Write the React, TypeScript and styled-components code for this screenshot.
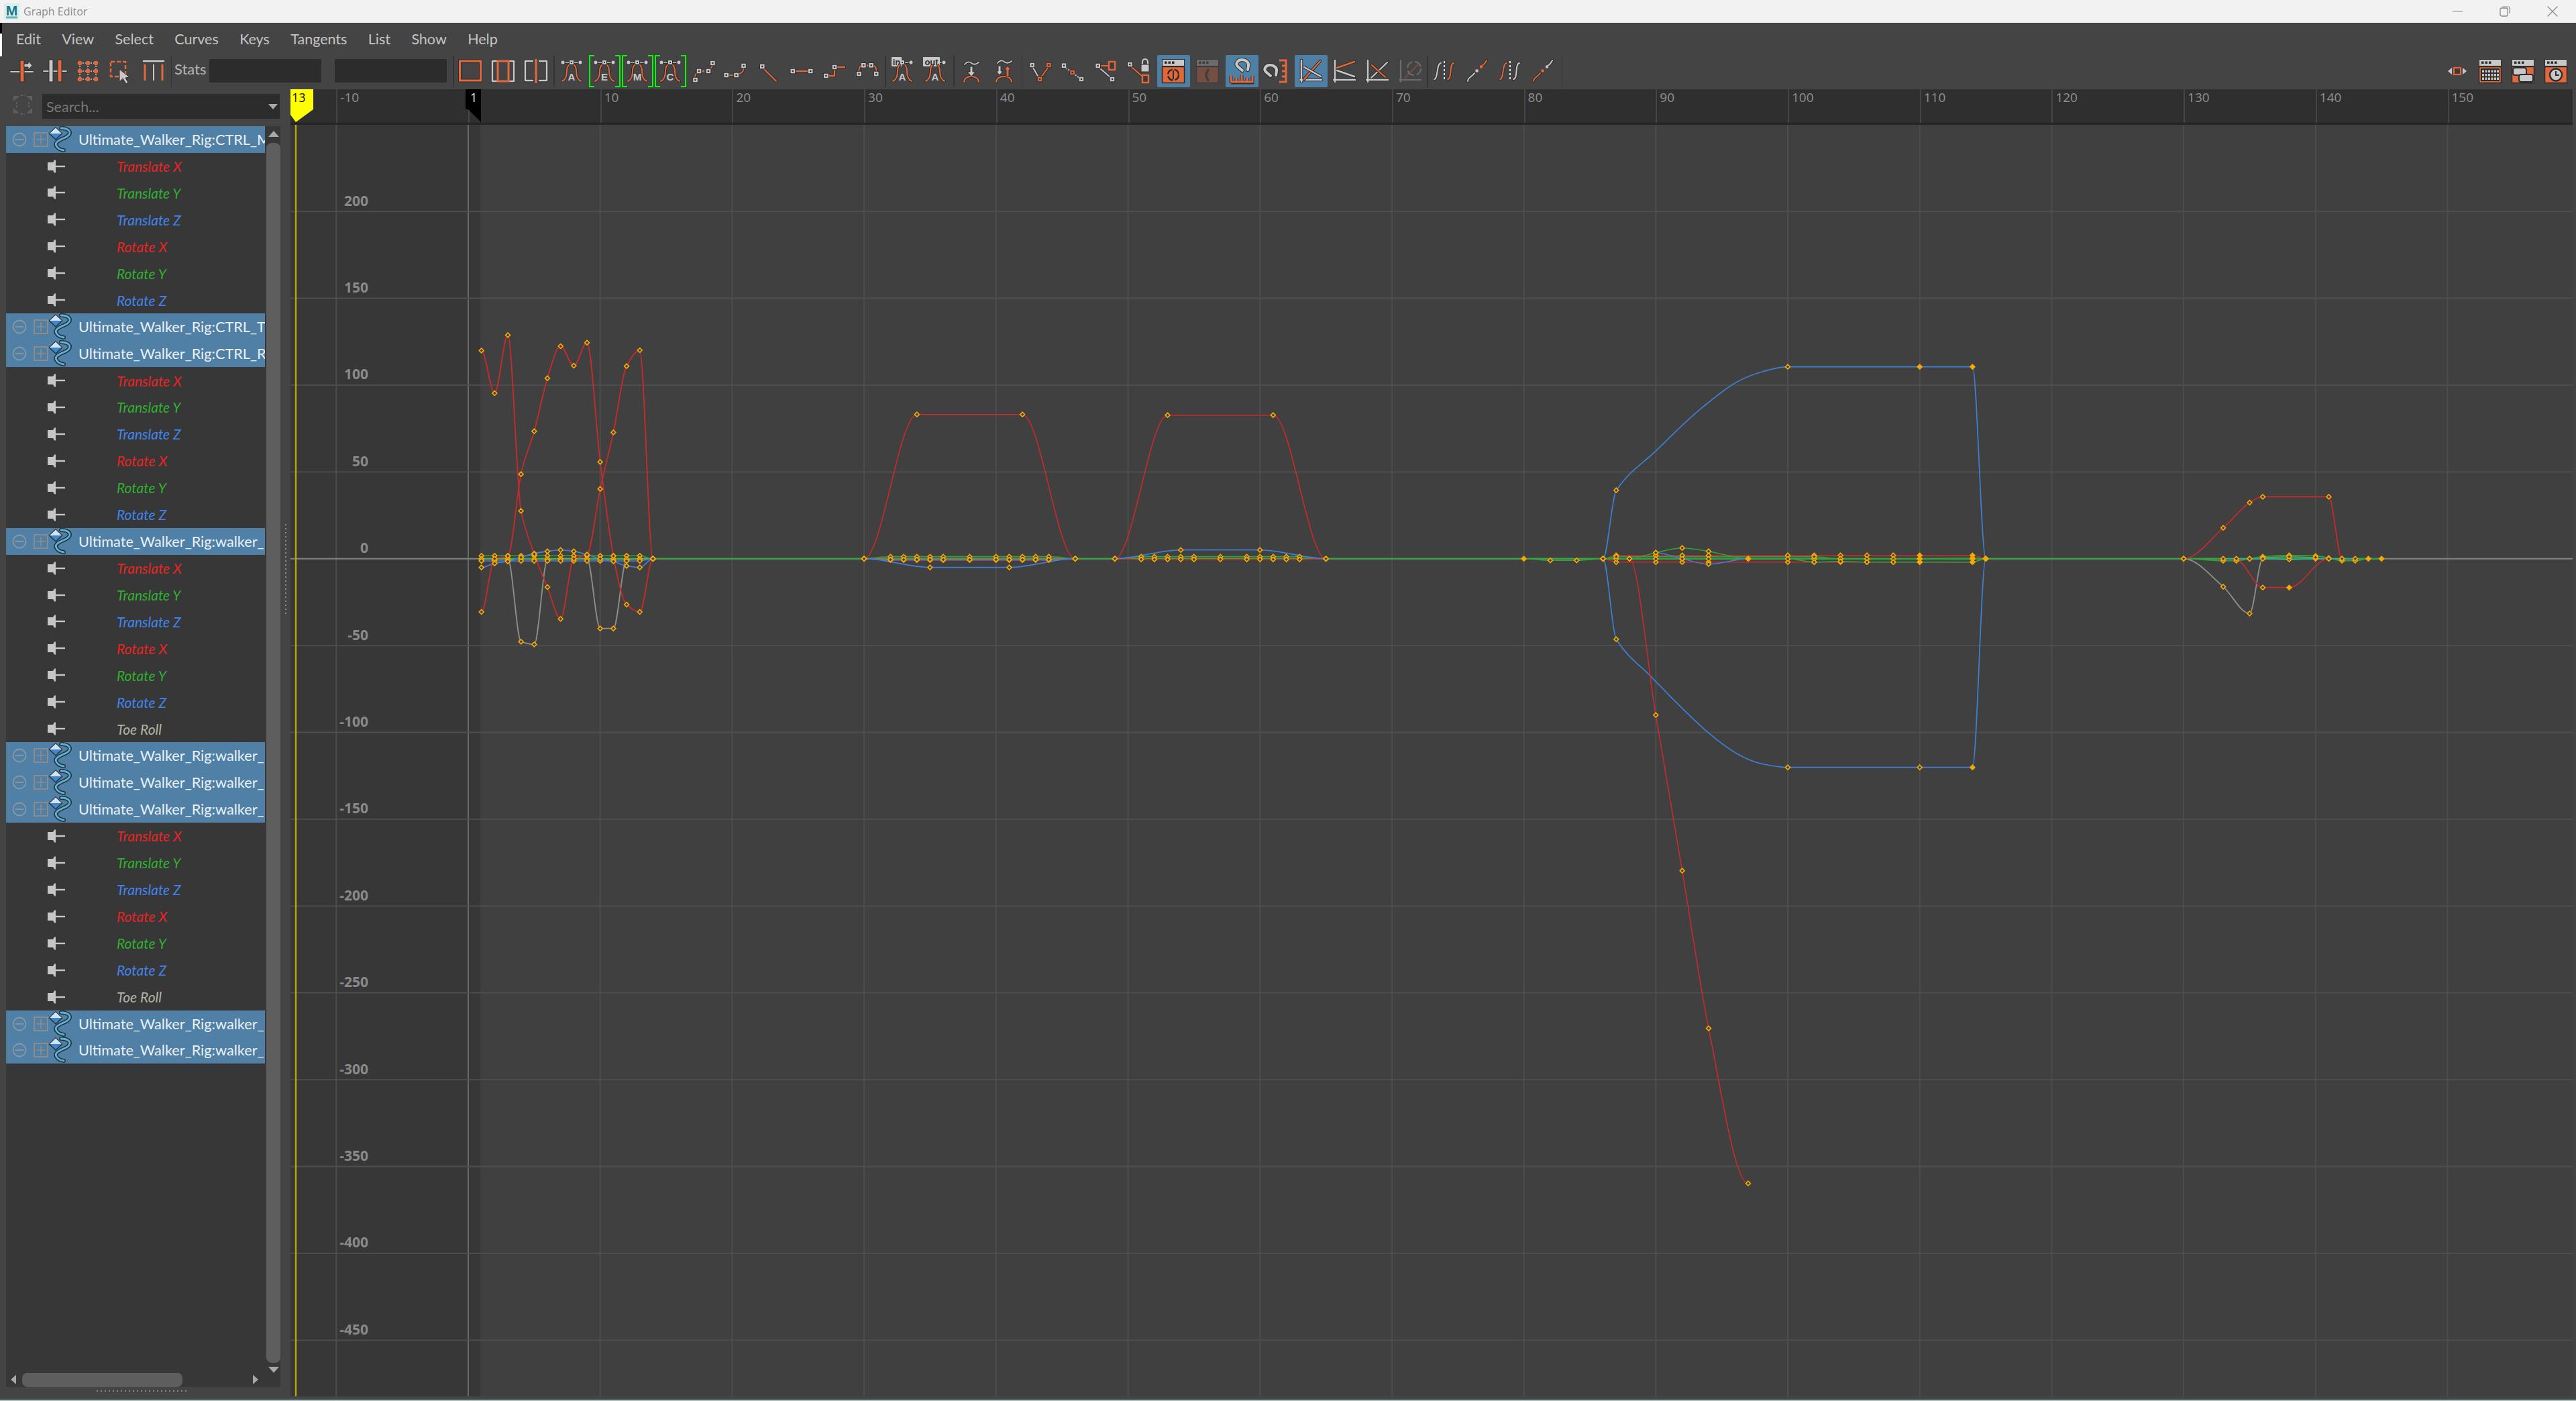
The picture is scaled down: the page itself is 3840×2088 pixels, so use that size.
import React from "react";
import styled, { createGlobalStyle } from "styled-components";

const O = "#e2673a";
const G = "#c8c8c8";
const D = "#2c2c2c";
const FONT = `"Open Sans", "Liberation Sans", sans-serif`;

const Global = createGlobalStyle`
  html, body { margin: 0; padding: 0; background: #444; }
  #root { width: 3840px; height: 2088px; }
  * { box-sizing: border-box; }
`;

/* ---------- chart geometry ---------- */
const GX = 433;
const GY = 186;
const GW = 3402;
const GH = 1895;
const fx = (f: number) => 698 + 19.67 * f;
const BASE = 832.7;
const vy = (v: number) => BASE - 2.588 * v;

type Knot = [number, number, boolean?];
type Curve = { c: string; w?: number; pts: Knot[] };

const smooth = (pts: [number, number][]) => {
  const n = pts.length;
  const d: number[] = [];
  for (let i = 0; i < n - 1; i++) d.push((pts[i + 1][1] - pts[i][1]) / (pts[i + 1][0] - pts[i][0]));
  const m: number[] = new Array(n).fill(0);
  for (let i = 1; i < n - 1; i++) {
    if (d[i - 1] * d[i] <= 0) m[i] = 0;
    else {
      const a = (d[i - 1] + d[i]) / 2;
      const lim = 1.5 * Math.min(Math.abs(d[i - 1]), Math.abs(d[i]));
      m[i] = Math.sign(a) * Math.min(Math.abs(a), lim);
    }
  }
  let s = `M${pts[0][0].toFixed(1)} ${pts[0][1].toFixed(1)}`;
  for (let i = 0; i < n - 1; i++) {
    const h = (pts[i + 1][0] - pts[i][0]) / 3;
    s += `C${(pts[i][0] + h).toFixed(1)} ${(pts[i][1] + m[i] * h).toFixed(1)} ${(pts[i + 1][0] - h).toFixed(1)} ${(pts[i + 1][1] - m[i + 1] * h).toFixed(1)} ${pts[i + 1][0].toFixed(1)} ${pts[i + 1][1].toFixed(1)}`;
  }
  return s;
};

const RED = "#c92a2a";
const BLUE = "#3f7fd2";
const GREEN = "#2fa33c";
const LGREEN = "#55b060";
const GREY = "#8b908b";
const near = (frames: number[], dy: number, ends: number[] = []): Knot[] =>
  frames.map((f) => [f, ends.includes(f) ? 0 : dy] as Knot);

const S1 = [1, 2, 3, 4, 5, 6, 7, 8, 9, 10, 11, 12, 13, 14];
const S2 = [30, 32, 33, 34, 35, 36, 38, 40, 41, 42, 43, 44, 46];
const S3 = [49, 51, 52, 53, 54, 55, 57, 59, 60, 61, 62, 63, 65];
const S4 = [87, 90, 92, 94, 100, 102, 104, 106, 108, 110, 114];
const S4b = [86, ...S4, 115];

const curves: Curve[] = [
  /* section 1 */
  { c: GREY, w: 1.8, pts: [[1, 0], [2, 0], [3, 0], [4, 123.7], [5, 127.7], [6, 2], [7, 0], [8, 0], [9, 0], [10, 104], [11, 104], [12, 2], [13, 0], [14, 0]] },
  { c: GREEN, pts: near(S1, -4.4, [14]) },
  { c: LGREEN, pts: near(S1, 0.5, [14]) },
  { c: BLUE, pts: near(S1, 3.2, [14]) },
  { c: BLUE, w: 1.8, pts: [[1, 13], [2, 7], [3, 4], [4, -2], [5, -7.7], [6, -11], [7, -13], [8, -11], [9, -6], [10, 0], [11, 4], [12, 10.7], [13, 13], [14, 0]] },
  { c: RED, w: 1.8, pts: [[1, -310.3], [2, -246.7], [3, -333.3], [4, -71.3], [5, -7], [6, 42.3], [7, 89.7], [8, 0], [9, -6], [10, -104], [11, -188.3], [12, -287], [13, -310.7], [14, 0]] },
  { c: RED, w: 1.8, pts: [[1, 79.3], [2, 0], [3, -4], [4, -126], [5, -190], [6, -269], [7, -316.7], [8, -287.7], [9, -322], [10, -144.3], [11, -4], [12, 68.3], [13, 79.3], [14, 0]] },
  /* section 2 */
  { c: GREEN, w: 1.8, pts: near(S2, -3, [30, 46]) },
  { c: BLUE, pts: near(S2, 2, [30, 46]) },
  { c: "#d84a6a", pts: near(S2, 1.3, [30, 46]) },
  { c: BLUE, w: 1.8, pts: [[30, 0], [35, 13], [41, 13], [46, 0]] },
  { c: RED, w: 1.6, pts: [[30, 0], [34, -215], [42, -215], [46, 0]] },
  /* section 3 */
  { c: GREEN, w: 1.8, pts: near(S3, -3, [49, 65]) },
  { c: RED, pts: near(S3, 1, [49, 65]) },
  { c: BLUE, w: 1.8, pts: [[49, 0], [54, -13], [60, -13], [65, 0]] },
  { c: RED, w: 1.6, pts: [[49, 0], [53, -214], [61, -214], [65, 0]] },
  /* section 4 */
  { c: GREEN, pts: [[80, 0], [82, 2.5], [84, 2.5], [86, 0]] },
  { c: RED, w: 1.6, pts: near(S4b, -5, [86, 115]) },
  { c: RED, w: 1.6, pts: near(S4b, 5, [86, 115]) },
  { c: GREEN, pts: near(S4b, 0.4, [86, 115]) },
  { c: GREEN, pts: [[86, 0], [87, -3], [100, -3, true], [102, -3], [104, 0], [110, 0], [114, -1], [115, 0]] },
  { c: GREEN, pts: [[100, 0, true], [102, 5], [104, 4], [106, 5], [108, 5], [110, 5], [114, 5], [115, 0]] },
  { c: GREEN, pts: [[88, 0], [90, -9], [92, -16], [94, -11], [97, 0]] },
  { c: BLUE, pts: [[90, -9], [92, 0], [94, 8], [97, 0]] },
  { c: BLUE, w: 1.7, pts: [[86, 0], [87, -102], [89.97, -160, true], [93.2, -220, true], [96.1, -263, true], [98.1, -279, true], [100, -286], [110, -286], [114, -286], [115, 0]] },
  { c: BLUE, w: 1.7, pts: [[86, 0], [87, 120], [89.6, 175, true], [93.9, 258, true], [96.1, 290, true], [98.1, 306, true], [100, 311], [110, 311], [114, 311], [115, 0]] },
  { c: RED, w: 1.6, pts: [[88, 0], [90, 233], [92, 465], [94, 700], [97, 931]] },
  /* section 5 */
  { c: GREEN, w: 1.8, pts: [[130, 0], [133, 3], [134, 3], [135, 0], [136, -3], [138, -5], [140, -4], [141, -1], [142, 3], [143, 3], [144, 0], [145, 0]] },
  { c: "#3aa8a0", pts: [[133, 0], [134, 0], [135, 0], [136, 0], [138, 1], [140, 0], [141, 0], [142, 0], [143, 0]] },
  { c: LGREEN, pts: [[136, -2], [138, -3], [140, -2]] },
  { c: GREY, w: 1.8, pts: [[130, 0], [133, 41.7], [135, 81.7], [136, 0]] },
  { c: RED, w: 1.7, pts: [[134, 2, true], [136, 43], [138, 43], [141, 0]] },
  { c: RED, w: 1.7, pts: [[130, 0], [133, -46], [135, -83.7], [136, -92.3], [141, -92.3], [142, 0]] },
];

const solidKeys: [number, number][] = [
  [80, 0], [84, 1], [97, 0], [110, -286], [114, -286], [114, 311], [110, 5], [110, -5], [110, 0], [114, 5], [114, -5], [114, 0], [115, 0],
  [138, 43], [144, 0], [145, 0],
];

const Diamond = ({ x, y, solid }: { x: number; y: number; solid?: boolean }) => (
  <polygon
    points={`${x},${y - 3.4} ${x + 3.4},${y} ${x},${y + 3.4} ${x - 3.4},${y}`}
    fill={solid ? "#f5a800" : "#3a3a3a"}
    stroke="#f5a800"
    strokeWidth={1.7}
  />
);

/* ---------- layout ---------- */
const Window = styled.div`
  width: 3840px;
  height: 2088px;
  background: #444;
  display: flex;
  flex-direction: column;
  overflow: hidden;
  position: relative;
  font-family: ${FONT};
`;
const TitleBar = styled.header`
  height: 34px;
  flex: none;
  background: #f2f2f2;
  display: flex;
  align-items: center;
  padding-left: 6px;
`;
const TitleText = styled.span`
  font-size: 16px;
  color: #8a8a8a;
  margin-left: 6px;
  flex: 1;
`;
const WinButton = styled.span`
  width: 70.5px;
  height: 34px;
  display: flex;
  align-items: center;
  justify-content: center;
`;
const EdgeMark = styled.i`
  position: absolute;
  left: 0;
  top: 34px;
  width: 3px;
  height: 50px;
  background: linear-gradient(#000 0 16px, #fff 16px 100%);
`;
const MenuBar = styled.nav`
  height: 48px;
  flex: none;
  display: flex;
  align-items: center;
  padding-left: 24px;
  gap: 31.4px;
  font-size: 21.5px;
  color: #c4c4c4;
  font-family: Lato, ${FONT};
`;
const ToolBar = styled.div`
  height: 51px;
  flex: none;
  display: flex;
  align-items: flex-start;
  padding-left: 8.5px;
  position: relative;
`;
const ToolButton = styled.span<{ $ml?: number; $active?: boolean; $bracket?: boolean }>`
  position: relative;
  width: 49px;
  height: 48px;
  flex: none;
  margin-left: ${(p) => p.$ml ?? 0}px;
  display: flex;
  align-items: center;
  justify-content: center;
  border-radius: 2px;
  background: ${(p) => (p.$active ? "#4e80a5" : "transparent")};
  ${(p) =>
    p.$bracket &&
    `&::before, &::after {
       content: "";
       position: absolute;
       top: 0;
       bottom: 0;
       width: 6px;
       border: 2.5px solid #12f012;
     }
     &::before { left: 1px; border-right: none; }
     &::after { right: 1px; border-left: none; }`}
`;
const Sep = styled.i<{ $ml?: number }>`
  width: 1.5px;
  height: 46px;
  margin-top: 1px;
  margin-left: ${(p) => p.$ml ?? 1}px;
  flex: none;
  background: #333;
`;
const StatsLabel = styled.span`
  font-size: 22px;
  color: #b4b4b4;
  margin: 7px 6px 0 4px;
  width: 46px;
  font-family: Lato, ${FONT};
`;
const Field = styled.span<{ $ml?: number }>`
  width: 167px;
  height: 35px;
  margin-top: 6px;
  margin-left: ${(p) => p.$ml ?? 0}px;
  background: #2c2c2c;
  border-radius: 2px;
  flex: none;
`;
const RightTools = styled.div`
  margin-left: auto;
  margin-right: 5.5px;
  display: flex;
`;
const Main = styled.main`
  flex: 1;
  min-height: 0;
  display: flex;
`;
const LeftPanel = styled.aside`
  width: 433px;
  flex: none;
  display: flex;
`;
const LeftCol = styled.div`
  width: 418px;
  flex: none;
  display: flex;
  flex-direction: column;
`;
const GripCol = styled.div`
  flex: 1;
  display: flex;
  justify-content: center;
  padding-top: 648px;
`;
const GripV = styled.i`
  width: 2px;
  height: 134px;
  background: repeating-linear-gradient(#8a8a8a 0 2px, transparent 2px 6px);
`;
const SearchRow = styled.div`
  height: 54.6px;
  flex: none;
  display: flex;
  padding: 7px 0 0 19px;
  gap: 14px;
`;
const SearchBox = styled.div`
  width: 354px;
  height: 37px;
  background: #2c2c2c;
  display: flex;
  align-items: center;
  justify-content: space-between;
  padding: 0 3px 0 6px;
  color: #777;
  font-size: 21.5px;
  font-family: Lato, ${FONT};
`;
const Caret = styled.i<{ $dir: "up" | "down" | "left" | "right"; $s?: number }>`
  width: 0;
  height: 0;
  flex: none;
  ${(p) => {
    const s = p.$s ?? 8;
    const c = "#a8a8a8";
    const t = "transparent";
    if (p.$dir === "up") return `border-left:${s}px solid ${t};border-right:${s}px solid ${t};border-bottom:${s + 1}px solid ${c};`;
    if (p.$dir === "down") return `border-left:${s}px solid ${t};border-right:${s}px solid ${t};border-top:${s + 1}px solid ${c};`;
    if (p.$dir === "left") return `border-top:${s}px solid ${t};border-bottom:${s}px solid ${t};border-right:${s + 1}px solid ${c};`;
    return `border-top:${s}px solid ${t};border-bottom:${s}px solid ${t};border-left:${s + 1}px solid ${c};`;
  }}
`;
const Outliner = styled.div`
  margin-left: 9px;
  height: 1879.4px;
  flex: none;
  background: #373737;
  display: grid;
  grid-template-columns: 385.6px 3.4px 20px;
  grid-template-rows: 1858.4px 21px;
`;
const Rows = styled.div`
  grid-column: 1;
  grid-row: 1;
  overflow: hidden;
`;
const HeaderRow = styled.div`
  height: 39.95px;
  background: #5080a6;
  display: flex;
  align-items: center;
  position: relative;
  color: #e9f1f6;
  font-size: 21.7px;
  font-family: Lato, ${FONT};
  white-space: nowrap;
  overflow: visible;
  padding-left: 108px;
`;
const HeaderIcon = styled.svg`
  position: absolute;
  left: 0;
  top: 0;
  width: 104px;
  height: 40px;
`;
const AttrRow = styled.div<{ $c: string }>`
  height: 39.95px;
  display: flex;
  align-items: center;
  position: relative;
  padding-left: 165px;
  color: ${(p) => p.$c};
  font-size: 21px;
  font-style: italic;
  font-family: Lato, ${FONT};
`;
const PinIcon = styled.svg`
  position: absolute;
  left: 62px;
  top: 10px;
  width: 28px;
  height: 20px;
`;
const VScroll = styled.div`
  grid-column: 3;
  grid-row: 1;
  display: flex;
  flex-direction: column;
  align-items: center;
  padding-top: 7px;
`;
const VThumb = styled.div`
  width: 21px;
  flex: 1;
  margin: 9.4px 0 6px;
  border-radius: 8px;
  background: #5e5e5e;
`;
const HScroll = styled.div`
  grid-column: 1 / 4;
  grid-row: 2;
  display: flex;
  align-items: center;
  padding-left: 7px;
`;
const HThumb = styled.div`
  width: 239px;
  height: 21px;
  margin: 0 105px 0 9px;
  border-radius: 8px;
  background: #5e5e5e;
`;
const GripH = styled.i`
  display: block;
  margin: 5px 0 0 144px;
  width: 134px;
  height: 2px;
  background: repeating-linear-gradient(90deg, #8a8a8a 0 2px, transparent 2px 6px);
`;
const GraphPane = styled.section`
  flex: 1;
  min-width: 0;
  display: flex;
  flex-direction: column;
  padding: 0 5px 5px 0;
`;
const Ruler = styled.div`
  height: 53px;
  flex: none;
  position: relative;
  background: #2f2f2f;
  border-bottom: 3px solid #252525;
  box-shadow: inset 0 -1px 0 #2a2a2a;
  overflow: hidden;
`;
const RulerTick = styled.span`
  position: absolute;
  top: 0;
  bottom: 0;
  border-left: 2px solid #454545;
  padding-left: 4px;
  font-size: 19px;
  line-height: 25px;
  color: #8f8f8f;
`;
const TimeMark = styled.svg`
  position: absolute;
  top: 0;
  height: 50px;
`;
const Canvas = styled.div`
  flex: 1;
  min-height: 0;
  position: relative;
  background: #404040;
  overflow: hidden;
`;
const ChartSvg = styled.svg`
  position: absolute;
  inset: 0;
  width: 100%;
  height: 100%;
  display: block;
`;
const BottomStrip = styled.div`
  height: 2px;
  flex: none;
  background: #a8bebe;
`;

/* ---------- icon helpers ---------- */
const Wire = ({ d, c = G, w = 2.5 }: { d: string; c?: string; w?: number }) => (
  <>
    <path d={d} fill="none" stroke={D} strokeWidth={w + 2} strokeLinecap="round" strokeLinejoin="round" />
    <path d={d} fill="none" stroke={c} strokeWidth={w} strokeLinecap="round" strokeLinejoin="round" />
  </>
);
const Key = ({ x, y, c = G }: { x: number; y: number; c?: string }) => (
  <>
    <rect x={x - 3.8} y={y - 3.8} width={7.6} height={7.6} fill={c} stroke={D} strokeWidth={1} />
    <rect x={x - 1.2} y={y - 1.2} width={2.4} height={2.4} fill={D} />
  </>
);
const Ico = ({ children, dim }: { children: React.ReactNode; dim?: boolean }) => (
  <svg width={36} height={36} viewBox="0 0 36 36" style={{ overflow: "visible", opacity: dim ? 0.3 : 1 }}>
    {children}
  </svg>
);
const TopKeys = ({ lead }: { lead?: string }) => (
  <>
    {!lead && <Wire d="M5 5 H31" w={1.6} />}
    {!lead && <circle cx={5} cy={5} r={3.2} fill={G} stroke={D} />}
    {lead && <Wire d="M18 5 H31" w={1.6} />}
    <rect x={14.5} y={1.5} width={7} height={7} fill={G} stroke={D} />
    <rect x={17} y={4} width={2} height={2} fill={D} />
    <circle cx={31} cy={5} r={3.2} fill={G} stroke={D} />
    {lead && (
      <>
        <rect x={lead === "in" ? 2 : 0} y={-3} width={lead === "in" ? 15 : 25} height={14} rx={1} fill={G} />
        <text x={lead === "in" ? 9.5 : 12.5} y={8.5} textAnchor="middle" fontSize={13} fontWeight={700} fontFamily="Liberation Sans, sans-serif" fill={D}>
          {lead}
        </text>
      </>
    )}
  </>
);
const TanLetter = ({ t, lead }: { t: string; lead?: string }) => (
  <Ico>
    <TopKeys lead={lead} />
    <Wire d="M4 33 C9 31 11 26 11 18 C11 14 12 11 14 9" c={O} w={2} />
    <Wire d="M32 33 C27 31 25 26 25 18 C25 14 24 11 22 9" c={O} w={2} />
    <text x={18} y={32} textAnchor="middle" fontSize={15} fontWeight={700} fontFamily="Liberation Sans, sans-serif" fill={G}>
      {t}
    </text>
  </Ico>
);
const WinIcon = ({ children, dim }: { children?: React.ReactNode; dim?: boolean }) => (
  <Ico dim={dim}>
    <rect x={1.5} y={0.5} width={33} height={10} fill={G} stroke={D} />
    <rect x={5} y={3.5} width={3.5} height={3.5} fill={D} />
    <rect x={10.5} y={3.5} width={3.5} height={3.5} fill={D} />
    <rect x={16} y={3.5} width={3.5} height={3.5} fill={D} />
    <rect x={1.5} y={11.5} width={33} height={24} fill={O} stroke={D} strokeWidth={1.5} />
    {children}
  </Ico>
);
const Axes = ({ children, dim }: { children: React.ReactNode; dim?: boolean }) => (
  <Ico dim={dim}>
    <Wire d="M4 2 V34 M2 31 H34" w={2.5} />
    {children}
  </Ico>
);
const Magnet = ({ x = 0 }: { x?: number }) => (
  <g transform={`translate(${x} 0)`}>
    <Wire d="M16 17 L9 11 C5 7 9 1 15 1 C21 1 26 5 25 10 L24 16" w={4} />
  </g>
);
const Chain = ({ first, second }: { first: string; second: string }) => (
  <Ico>
    <Wire d="M4 33 C4 27 11 26 14 21" c={first} w={2} />
    <Wire d="M25 10 C29 8 30 6 32 2" c={second} w={2} />
    <rect x={15.5} y={15.5} width={4} height={4} fill={first} />
    <rect x={22} y={9.5} width={4} height={4} fill={second} />
  </Ico>
);
const Mirror = ({ left, right }: { left: string; right: string }) => (
  <Ico>
    <Wire d="M3 30 C9 30 6 6 13 6" c={left} w={2} />
    <Wire d="M23 30 C30 30 25 6 32 6" c={right} w={2} />
    <path d="M18 3 V33" stroke="#e0e0e0" strokeWidth={2} strokeDasharray="3 3" />
  </Ico>
);

const icons: Record<string, React.ReactNode> = {
  move: (
    <Ico>
      <Wire d="M1 19 H34" w={2} />
      <rect x={15} y={2} width={6} height={32} fill={O} stroke={D} />
      <path d="M21 7 H27 V3 L33 9.5 L27 16 V12 H21 Z" fill={G} stroke={D} />
    </Ico>
  ),
  scale: (
    <Ico>
      <Wire d="M1 18 H35" w={1.8} />
      <rect x={9} y={1} width={6} height={33} fill={G} stroke={D} />
      <rect x={22} y={1} width={6} height={33} fill={O} stroke={D} />
    </Ico>
  ),
  lattice: (
    <Ico>
      <path d="M6 6 H30 M6 18 H30 M6 30 H30 M6 6 V30 M18 6 V30 M30 6 V30" stroke={G} strokeWidth={1.5} strokeDasharray="2 2" />
      {[6, 18, 30].map((x) => [6, 18, 30].map((y) => <circle key={`${x}${y}`} cx={x} cy={y} r={3.3} fill={O} />))}
    </Ico>
  ),
  select: (
    <Ico>
      <rect x={3} y={4} width={22} height={22} fill="none" stroke={O} strokeWidth={2.5} strokeDasharray="6 3" />
      <path d="M16 15 L16 34 L21 29 L26 37 L29 35 L25 28 L31 27 Z" fill={G} stroke={D} />
    </Ico>
  ),
  snap: (
    <Ico>
      <Wire d="M3 3 H33" w={3} />
      <path d="M5 8 V32 M31 8 V32" stroke={O} strokeWidth={3} />
      <path d="M18 8 V32" stroke={G} strokeWidth={2} />
    </Ico>
  ),
  frameAll: (
    <Ico>
      <rect x={2.5} y={3} width={31} height={29} fill="none" stroke={D} strokeWidth={5} />
      <rect x={2.5} y={3} width={31} height={29} fill="none" stroke={O} strokeWidth={3} />
    </Ico>
  ),
  frameSel: (
    <Ico>
      <Wire d="M8 3 H2 V33 H8 M28 3 H34 V33 H28" w={2.5} />
      <rect x={10} y={3} width={16} height={30} fill="none" stroke={O} strokeWidth={3} />
    </Ico>
  ),
  frameCur: (
    <Ico>
      <Wire d="M13 3 H2 V32 H13 M23 3 H34 V32 H23" w={2.5} />
      <path d="M18 0 V36" stroke={O} strokeWidth={3} />
    </Ico>
  ),
  tanSpline: (
    <Ico>
      <Wire d="M6 26 Q7 21 10 19 M28 15 Q31 13 32 10" c={O} w={2} />
      <Key x={6.5} y={31} />
      <Key x={12} y={18} />
      <rect x={17} y={16.5} width={3} height={3} fill={O} />
      <Key x={26} y={18} />
      <Key x={32.4} y={6} />
    </Ico>
  ),
  tanClamp: (
    <Ico>
      <Wire d="M8 24 H14 M23 22 Q28 21 29.5 15" c={O} w={2} />
      <Key x={3.7} y={24} />
      <Key x={18.6} y={24} />
      <Key x={29.5} y={10} />
    </Ico>
  ),
  tanLinear: (
    <Ico>
      <Wire d="M11 15 L29 33" c={O} w={2.2} />
      <Key x={8.3} y={11} />
    </Ico>
  ),
  tanFlat: (
    <Ico>
      <Wire d="M8 18 H28" c={O} w={2.6} />
      <Key x={4.8} y={18} />
      <Key x={31.2} y={18} />
    </Ico>
  ),
  tanStep: (
    <Ico>
      <Wire d="M10 25 H18 V17 M23 12 H33" c={O} w={2.4} />
      <Key x={5.4} y={25} />
      <Key x={18} y={12} />
    </Ico>
  ),
  tanPlateau: (
    <Ico>
      <Wire d="M5.4 17 Q6 11 8.5 10 M27.5 10 Q31 11 31.2 17" c={O} w={2} />
      <rect x={17} y={8.5} width={2.5} height={2.5} fill={O} />
      <Key x={5.4} y={22} />
      <Key x={12.3} y={9.3} />
      <Key x={23.7} y={9.3} />
      <Key x={31.2} y={22} />
    </Ico>
  ),
  unify: (
    <Ico>
      <Wire d="M8 8 Q13 2 18 6 T29 5" w={1.8} />
      <Wire d="M7 34 Q8 26 18 26 Q28 26 29 34" c={O} w={2.2} />
      <path d="M16 11 H20 V19 H24 L18 26 L12 19 H16 Z" fill={G} stroke={D} />
    </Ico>
  ),
  breakT: (
    <Ico>
      <Wire d="M8 6 Q13 0 18 4 T29 3" w={1.8} />
      <Wire d="M6 34 Q7 26 18 26 Q28 26 29 34" c={O} w={2.2} />
      <path d="M9 10 H13 V18 H16 L11 24 L6 18 H9 Z" fill={G} stroke={D} />
      <path d="M21 26 V16 H18 L23 10 L28 16 H25 V26 Z" fill={O} stroke={D} />
    </Ico>
  ),
  vee: (
    <Ico>
      <Wire d="M9 13 L17 27" w={2} />
      <Wire d="M31 13 L21 27" c={O} w={2} />
      <Key x={7.7} y={9} />
      <Key x={32.3} y={9} c={O} />
      <Key x={19} y={30} c={O} />
    </Ico>
  ),
  dash: (
    <Ico>
      <path d="M8 13 L16 18 M22 23 L29 28" stroke={G} strokeWidth={2} strokeDasharray="3 2" />
      <Key x={6} y={9.7} />
      <Key x={18.6} y={20} c={O} />
      <Key x={32} y={30} />
    </Ico>
  ),
  tail: (
    <Ico>
      <Wire d="M11 10 H24" c={O} w={2.4} />
      <Wire d="M11 14 L27 28" w={2} />
      <Key x={7.7} y={10} />
      <rect x={24} y={4} width={9} height={12} fill="#3c3c3c" stroke={O} strokeWidth={2.4} />
      <Key x={29} y={30} />
    </Ico>
  ),
  lock: (
    <Ico>
      <Wire d="M11 12 L27 26" c={O} w={2.2} />
      <Key x={8.3} y={8} />
      <rect x={27} y={24} width={9} height={11} fill="#3c3c3c" stroke={O} strokeWidth={2.4} />
      <path d="M27 8 V5 Q27 0 31 0 Q35 0 35 5 V8" fill="none" stroke={G} strokeWidth={2} />
      <rect x={25} y={8} width={12} height={11} fill={G} stroke={D} />
    </Ico>
  ),
  winSync: (
    <WinIcon>
      <circle cx={18} cy={23.5} r={8} fill="none" stroke={D} strokeWidth={2.5} strokeDasharray="10 3" />
      <path d="M18 17 V30" stroke={D} strokeWidth={2} />
    </WinIcon>
  ),
  winDim: (
    <WinIcon dim>
      <path d="M20 15 Q12 24 20 33" fill="none" stroke={D} strokeWidth={3} />
    </WinIcon>
  ),
  magnetRule: (
    <Ico>
      <Magnet x={3} />
      <path d="M2 35 H34 V25 M2 35 V25 M10 35 V28 M18 35 V24 M26 35 V28" fill="none" stroke={D} strokeWidth={5} />
      <path d="M2 34 H34 V25 M2 34 V25 M10 34 V28 M18 34 V24 M26 34 V28" fill="none" stroke={O} strokeWidth={3} />
    </Ico>
  ),
  magnetSide: (
    <Ico>
      <g transform="translate(-5 8)">
        <Wire d="M16 17 L9 11 C5 7 9 1 15 1 C21 1 26 5 25 10 L24 16" w={4} />
      </g>
      <path d="M24 2 H34 V34 H24 M28 10 H34 M28 18 H34 M28 26 H34" fill="none" stroke={O} strokeWidth={3} />
    </Ico>
  ),
  axisX: (
    <Axes>
      <Wire d="M8 30 L32 3" c={O} w={2.4} />
      <Wire d="M8 12 L33 26" w={2.4} />
    </Axes>
  ),
  axisUp: (
    <Axes>
      <Wire d="M7 13 L33 4" c={O} w={2.4} />
      <Wire d="M7 17 L33 26" w={2.4} />
    </Axes>
  ),
  axisCross: (
    <Axes>
      <Wire d="M9 28 L33 5" w={2.2} />
      <Wire d="M10 9 L30 27" c={O} w={2.2} />
    </Axes>
  ),
  axisDim: (
    <Axes dim>
      <path d="M10 28 L30 8" stroke={O} strokeWidth={2} />
      <circle cx={24} cy={14} r={10} fill="none" stroke={G} strokeWidth={2} strokeDasharray="12 4" />
    </Axes>
  ),
  mirrorA: <Mirror left={G} right={O} />,
  chainA: <Chain first={G} second={O} />,
  mirrorB: <Mirror left={O} right={G} />,
  chainB: <Chain first={O} second={G} />,
  center: (
    <Ico>
      <path d="M4 18 L10 13 V23 Z M32 18 L26 13 V23 Z" fill={G} />
      <rect x={13} y={13} width={10} height={10} fill="#3a3a3a" stroke={O} strokeWidth={2.2} />
    </Ico>
  ),
  winKeys: (
    <WinIcon>
      <rect x={4} y={14} width={28} height={19} fill={D} />
      {[16.5, 22, 27.5].map((y) =>
        [6, 10.5, 15, 19.5, 24, 28].map((x) => <rect key={`${x}${y}`} x={x} y={y} width={3} height={3.5} fill={G} />)
      )}
    </WinIcon>
  ),
  winBars: (
    <WinIcon>
      <rect x={3} y={13} width={20} height={11} rx={3} fill={G} stroke={D} strokeWidth={2} />
      <rect x={12} y={23} width={21} height={11} rx={3} fill={G} stroke={D} strokeWidth={2} />
    </WinIcon>
  ),
  winClock: (
    <WinIcon>
      <circle cx={18} cy={23.5} r={9} fill={G} stroke={D} strokeWidth={2.5} />
      <path d="M18 18 V24 H23" fill="none" stroke={D} strokeWidth={2} />
    </WinIcon>
  ),
};

const HeaderGlyph = () => (
  <HeaderIcon viewBox="0 0 104 40">
    <circle cx={20} cy={20} r={9.5} fill="none" stroke="#8a98a2" strokeWidth={1.8} />
    <path d="M13.5 20 H26.5" stroke="#8a98a2" strokeWidth={1.8} />
    <rect x={42} y={10} width={20} height={20} fill="none" stroke="#8c8c8c" strokeWidth={2} />
    <path d="M52 13 V27 M45 20 H59" stroke="#8c8c8c" strokeWidth={1.6} />
    <path d="M84 3 C96 3 102 10 92 16 C82 21 72 24 78 31 Q81 35 88 36" transform="translate(-2 0)" fill="none" stroke="#2a3138" strokeWidth={6} strokeLinecap="round" />
    <path d="M84 3 C96 3 102 10 92 16 C82 21 72 24 78 31 Q81 35 88 36" transform="translate(-2 0)" fill="none" stroke="#58b4dc" strokeWidth={2.8} strokeLinecap="round" />
    <polygon points="74,2 83.5,11 74,20 64.5,11" fill="#3f86cc" stroke="#2a3138" strokeWidth={1.5} />
    <polygon points="74,2.5 83,11 65,11" fill="#cfe4f8" />
  </HeaderIcon>
);
const PinGlyph = () => (
  <PinIcon viewBox="0 0 28 20">
    <path d="M0 4 H8 L10 0.5 H12 V19.5 H10 L8 16 H0 Z" fill="#c6c6c6" />
    <path d="M12 10 H26" stroke="#c6c6c6" strokeWidth={2.4} />
  </PinIcon>
);

const RED_T = "#ea2424";
const GRN_T = "#30b030";
const BLU_T = "#4284ee";

const Header = ({ name }: { name: string }) => (
  <HeaderRow>
    <HeaderGlyph />
    {name}
  </HeaderRow>
);
const Attr = ({ label, c }: { label: string; c: string }) => (
  <AttrRow $c={c}>
    <PinGlyph />
    {label}
  </AttrRow>
);
const attrs = (toe?: boolean) => (
  <>
    <Attr label="Translate X" c={RED_T} />
    <Attr label="Translate Y" c={GRN_T} />
    <Attr label="Translate Z" c={BLU_T} />
    <Attr label="Rotate X" c={RED_T} />
    <Attr label="Rotate Y" c={GRN_T} />
    <Attr label="Rotate Z" c={BLU_T} />
    {toe && <Attr label="Toe Roll" c="#b4b4a8" />}
  </>
);

const Chart = () => {
  const allKeys: { x: number; y: number; solid: boolean; id: string }[] = [];
  curves.forEach((cv, i) =>
    cv.pts.forEach(([f, dy, hide]) => {
      if (hide) return;
      allKeys.push({
        x: fx(f),
        y: BASE + dy,
        solid: solidKeys.some(([a, b]) => a === f && Math.abs(b - dy) < 1.2),
        id: `${i}-${f}-${dy}`,
      });
    })
  );
  const frames: number[] = [];
  for (let f = -10; f <= 150; f += 10) frames.push(f);
  const vals: number[] = [];
  for (let v = 200; v >= -450; v -= 50) vals.push(v);
  return (
    <ChartSvg viewBox={`${GX} ${GY} ${GW} ${GH}`}>
      <rect x={GX} y={GY} width={716 - GX} height={GH} fill="#373737" />
      {frames.map((f) => (
        <line key={f} x1={fx(f)} x2={fx(f)} y1={GY} y2={GY + GH} stroke={f === 0 ? "#686868" : "#4d4d4d"} strokeWidth={2} />
      ))}
      {vals.map((v) => (
        <line key={v} x1={GX} x2={GX + GW} y1={vy(v)} y2={vy(v)} stroke="#4f4f4f" strokeWidth={1.8} />
      ))}
      <line x1={GX} x2={GX + GW} y1={BASE} y2={BASE} stroke="#808080" strokeWidth={2} />
      {vals.map((v) => (
        <text key={v} x={549} y={vy(v) - 8.5} textAnchor="end" fontSize={21} fontWeight={700} fontFamily={FONT} fill="#8a8a8a">
          {v}
        </text>
      ))}
      <line x1={441} x2={441} y1={GY} y2={GY + GH} stroke="#b5a90c" strokeWidth={2.4} />
      <line x1={fx(1)} x2={fx(145)} y1={BASE} y2={BASE} stroke="#2fae38" strokeWidth={1.7} />
      {curves.map((cv, i) => (
        <path
          key={i}
          d={smooth(cv.pts.map(([f, dy]) => [fx(f), BASE + dy] as [number, number]))}
          fill="none"
          stroke={cv.c}
          strokeWidth={cv.w ?? 1.5}
        />
      ))}
      {allKeys.map((k) => (
        <Diamond key={k.id} x={k.x} y={k.y} solid={k.solid} />
      ))}
    </ChartSvg>
  );
};

const rulerFrames: number[] = [];
for (let f = -10; f <= 150; f += 10) rulerFrames.push(f);

const Btn = ({ i, ml, active, bracket, children }: { i?: string; ml?: number; active?: boolean; bracket?: boolean; children?: React.ReactNode }) => (
  <ToolButton $ml={ml} $active={active} $bracket={bracket}>
    {i ? icons[i] : children}
  </ToolButton>
);

export default function App() {
  return (
    <>
      <Global />
      <Window>
        <TitleBar>
          <svg width={23} height={24} viewBox="0 0 23 24">
            <rect width={23} height={24} fill="#dcecec" />
            <text x={11.5} y={18} textAnchor="middle" fontSize={21} fontWeight={700} fontFamily="Liberation Sans, sans-serif" fill="#10788a">
              M
            </text>
            <rect x={3} y={19.5} width={17} height={3} fill="#5fb6c0" />
          </svg>
          <TitleText>Graph Editor</TitleText>
          <WinButton>
            <svg width={16} height={16} viewBox="0 0 16 16">
              <path d="M0 8 H15" stroke="#9a9a9a" strokeWidth={1.2} />
            </svg>
          </WinButton>
          <WinButton>
            <svg width={16} height={16} viewBox="0 0 16 16">
              <rect x={1} y={3} width={11} height={12} rx={2} fill="none" stroke="#8a8a8a" strokeWidth={1.3} />
              <path d="M4 1 H13 Q15 1 15 3 V11" fill="none" stroke="#8a8a8a" strokeWidth={1.2} />
            </svg>
          </WinButton>
          <WinButton>
            <svg width={16} height={16} viewBox="0 0 16 16">
              <path d="M0.5 0.5 L15.5 15.5 M15.5 0.5 L0.5 15.5" stroke="#8f8f8f" strokeWidth={1.3} />
            </svg>
          </WinButton>
        </TitleBar>
        <EdgeMark />
        <MenuBar>
          {["Edit", "View", "Select", "Curves", "Keys", "Tangents", "List", "Show", "Help"].map((m) => (
            <span key={m}>{m}</span>
          ))}
        </MenuBar>
        <ToolBar>
          <Btn i="move" />
          <Btn i="scale" />
          <Btn i="lattice" />
          <Btn i="select" />
          <Btn i="snap" />
          <Sep />
          <StatsLabel>Stats</StatsLabel>
          <Field />
          <Field $ml={20} />
          <Sep $ml={9} />
          <Btn i="frameAll" />
          <Btn i="frameSel" />
          <Btn i="frameCur" />
          <Sep $ml={1.5} />
          <Btn ml={1}><TanLetter t="A" /></Btn>
          <Btn bracket><TanLetter t="E" /></Btn>
          <Btn bracket><TanLetter t="M" /></Btn>
          <Btn bracket><TanLetter t="C" /></Btn>
          <Btn i="tanSpline" />
          <Btn i="tanClamp" />
          <Btn i="tanLinear" />
          <Btn i="tanFlat" />
          <Btn i="tanStep" />
          <Btn i="tanPlateau" />
          <Sep $ml={1.5} />
          <Btn><TanLetter t="A" lead="in" /></Btn>
          <Btn><TanLetter t="A" lead="out" /></Btn>
          <Sep $ml={2.5} />
          <Btn i="unify" ml={0.5} />
          <Btn i="breakT" />
          <Sep $ml={1.5} />
          <Btn i="vee" />
          <Btn i="dash" />
          <Btn i="tail" />
          <Btn i="lock" ml={-1.5} />
          <Btn i="winSync" ml={6} active />
          <Btn i="winDim" ml={2} />
          <Btn i="magnetRule" ml={2} active />
          <Btn i="magnetSide" ml={1} />
          <Btn i="axisX" ml={4} active />
          <Btn i="axisUp" ml={0.5} />
          <Btn i="axisCross" />
          <Btn i="axisDim" />
          <Sep />
          <Btn i="mirrorA" />
          <Btn i="chainA" />
          <Btn i="mirrorB" />
          <Btn i="chainB" />
          <Sep $ml={3} />
          <RightTools>
            <Btn i="center" />
            <Btn i="winKeys" />
            <Btn i="winBars" />
            <Btn i="winClock" />
          </RightTools>
        </ToolBar>
        <Main>
          <LeftPanel>
            <LeftCol>
              <SearchRow>
                <svg width={30} height={32} viewBox="0 0 30 32">
                  <path d="M1 3 L10 3 L1 11 Z M29 3 L20 3 L29 11 Z M1 29 L10 29 L1 21 Z M29 29 L20 29 L29 21 Z" fill="#5e5e5e" />
                  <path d="M6 12 V20 M24 12 V20 M12 2 H18 M12 30 H18" stroke="#5e5e5e" strokeWidth={2} strokeDasharray="3 2" />
                </svg>
                <SearchBox>
                  <span>Search...</span>
                  <Caret $dir="down" $s={7} />
                </SearchBox>
              </SearchRow>
              <Outliner>
                <Rows>
                  <Header name="Ultimate_Walker_Rig:CTRL_M" />
                  {attrs()}
                  <Header name="Ultimate_Walker_Rig:CTRL_T" />
                  <Header name="Ultimate_Walker_Rig:CTRL_R" />
                  {attrs()}
                  <Header name="Ultimate_Walker_Rig:walker_" />
                  {attrs(true)}
                  <Header name="Ultimate_Walker_Rig:walker_" />
                  <Header name="Ultimate_Walker_Rig:walker_" />
                  <Header name="Ultimate_Walker_Rig:walker_" />
                  {attrs(true)}
                  <Header name="Ultimate_Walker_Rig:walker_" />
                  <Header name="Ultimate_Walker_Rig:walker_" />
                </Rows>
                <VScroll>
                  <Caret $dir="up" $s={8} />
                  <VThumb />
                  <Caret $dir="down" $s={8} />
                </VScroll>
                <HScroll>
                  <Caret $dir="left" $s={7} />
                  <HThumb />
                  <Caret $dir="right" $s={7} />
                </HScroll>
              </Outliner>
              <GripH />
            </LeftCol>
            <GripCol>
              <GripV />
            </GripCol>
          </LeftPanel>
          <GraphPane>
            <Ruler>
              {rulerFrames.map((f) => (
                <RulerTick key={f} style={{ left: fx(f) - GX }}>
                  {f}
                </RulerTick>
              ))}
              <TimeMark viewBox="0 0 34 50" width={34} style={{ left: 0 }}>
                <polygon points="0,0 34,0 34,30 8,49 0,38" fill="#ffff00" />
                <text x={2} y={19} fontSize={18} fontFamily={FONT} fill="#111">
                  13
                </text>
              </TimeMark>
              <TimeMark viewBox="0 0 23 50" width={23} style={{ left: 693.5 - GX }}>
                <polygon points="0,0 23,0 23,49 4,30 0,30" fill="#000" />
                <text x={7} y={19} fontSize={18} fontFamily={FONT} fill="#eee">
                  1
                </text>
              </TimeMark>
            </Ruler>
            <Canvas>
              <Chart />
            </Canvas>
          </GraphPane>
        </Main>
        <BottomStrip />
      </Window>
    </>
  );
}
